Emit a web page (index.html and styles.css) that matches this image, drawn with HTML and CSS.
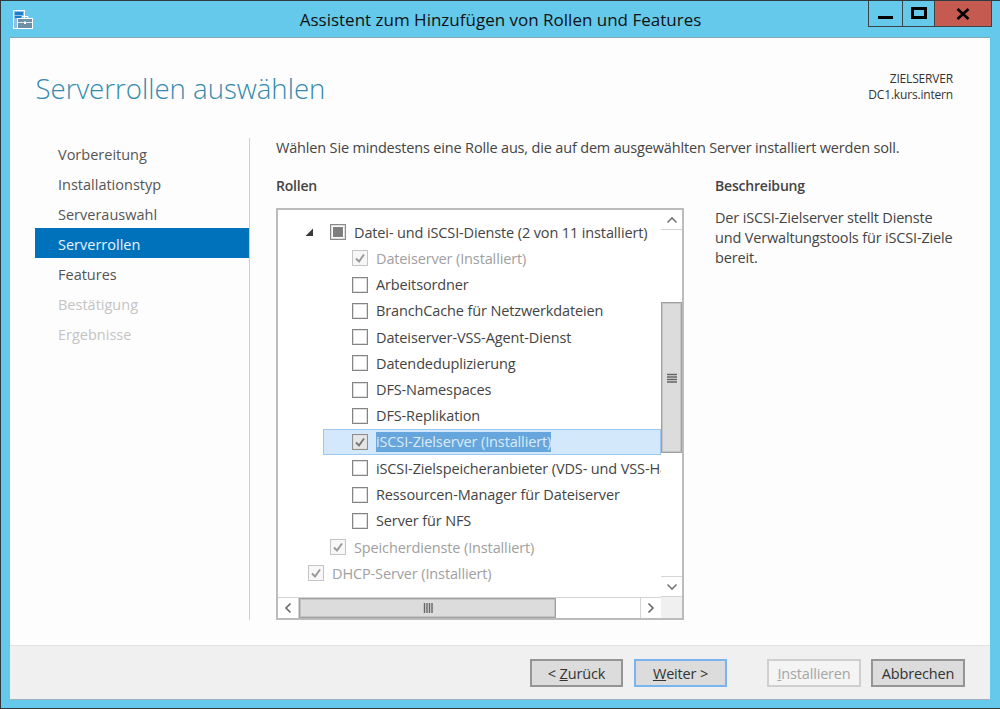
FILE: index.html
```html
<!DOCTYPE html>
<html lang="de">
<head>
<meta charset="utf-8">
<title>Assistent zum Hinzufügen von Rollen und Features</title>
<link rel="stylesheet" href="styles.css">
</head>
<body>
<div class="window">
  <header class="titlebar">
    <div class="app-icon">
      <svg width="20" height="20" viewBox="0 0 20 20">
        <rect x="0.5" y="0.5" width="11" height="18" fill="#8fc1e8" stroke="#fff"/>
        <rect x="2" y="2" width="8" height="3" fill="#1b7fd0"/>
        <rect x="2" y="6" width="8" height="2" fill="#1b7fd0"/>
        <rect x="4.5" y="8.5" width="15" height="10" fill="#6f8fa6" stroke="#fff"/>
        <path d="M9 8.500V6.500h6v2" fill="none" stroke="#fff"/>
        <rect x="5" y="12" width="14" height="1" fill="#dbe7ef"/>
        <rect x="11" y="11.500" width="2" height="2.500" fill="#fff"/>
      </svg>
    </div>
    <h1 class="window-title">Assistent zum Hinzufügen von Rollen und Features</h1>
    <div class="window-controls">
      <div class="ctl ctl-min"><span class="glyph-min"></span></div>
      <div class="ctl ctl-max"><span class="glyph-max"></span></div>
      <div class="ctl ctl-close">
        <svg width="14" height="12" viewBox="0 0 14 12"><path d="M1.500 1l11 10M12.500 1l-11 10" stroke="#000" stroke-width="2.600" fill="none"/></svg>
      </div>
    </div>
  </header>

  <div class="dialog">
    <div class="page">
      <div class="page-head">
        <h2 class="page-title">Serverrollen auswählen</h2>
        <div class="target">ZIELSERVER<br>DC1.kurs.intern</div>
      </div>
      <div class="page-body">
        <nav class="steps">
          <div class="step">Vorbereitung</div>
          <div class="step">Installationstyp</div>
          <div class="step">Serverauswahl</div>
          <div class="step step-active">Serverrollen</div>
          <div class="step">Features</div>
          <div class="step step-off">Bestätigung</div>
          <div class="step step-off">Ergebnisse</div>
        </nav>
        <main class="content">
          <p class="intro">Wählen Sie mindestens eine Rolle aus, die auf dem ausgewählten Server installiert werden soll.</p>
          <div class="columns">
            <section class="roles">
              <h3 class="label">Rollen</h3>
              <div class="listbox">
                <div class="tree">
                  <div class="row lvl2-arrow">
                    <svg class="arrow" width="10" height="10" viewBox="0 0 10 10"><path d="M9 1.500V9H1.500z" fill="#3a3a3a"/></svg>
                    <span class="cb cb-partial"></span><span class="txt">Datei- und iSCSI-Dienste (2 von 11 installiert)</span>
                  </div>
                  <div class="row lvl3 off"><span class="cb cb-on"><svg width="14" height="14" viewBox="0 0 14 14"><path d="M3 7.500l3 3 5-7" fill="none" stroke="#9a9a9a" stroke-width="2"/></svg></span><span class="txt">Dateiserver (Installiert)</span></div>
                  <div class="row lvl3"><span class="cb"></span><span class="txt">Arbeitsordner</span></div>
                  <div class="row lvl3"><span class="cb"></span><span class="txt">BranchCache für Netzwerkdateien</span></div>
                  <div class="row lvl3"><span class="cb"></span><span class="txt">Dateiserver-VSS-Agent-Dienst</span></div>
                  <div class="row lvl3"><span class="cb"></span><span class="txt">Datendeduplizierung</span></div>
                  <div class="row lvl3"><span class="cb"></span><span class="txt">DFS-Namespaces</span></div>
                  <div class="row lvl3"><span class="cb"></span><span class="txt">DFS-Replikation</span></div>
                  <div class="row lvl3 selected"><span class="cb cb-on"><svg width="14" height="14" viewBox="0 0 14 14"><path d="M3 7.500l3 3 5-7" fill="none" stroke="#7a7a7a" stroke-width="2"/></svg></span><span class="txt txt-sel">iSCSI-Zielserver (Installiert)</span></div>
                  <div class="row lvl3"><span class="cb"></span><span class="txt">iSCSI-Zielspeicheranbieter (VDS- und VSS-Hardwareanbieter)</span></div>
                  <div class="row lvl3"><span class="cb"></span><span class="txt">Ressourcen-Manager für Dateiserver</span></div>
                  <div class="row lvl3"><span class="cb"></span><span class="txt">Server für NFS</span></div>
                  <div class="row lvl2 off"><span class="cb cb-on"><svg width="14" height="14" viewBox="0 0 14 14"><path d="M3 7.500l3 3 5-7" fill="none" stroke="#9a9a9a" stroke-width="2"/></svg></span><span class="txt">Speicherdienste (Installiert)</span></div>
                  <div class="row lvl1 off"><span class="cb cb-on"><svg width="14" height="14" viewBox="0 0 14 14"><path d="M3 7.500l3 3 5-7" fill="none" stroke="#9a9a9a" stroke-width="2"/></svg></span><span class="txt">DHCP-Server (Installiert)</span></div>
                </div>
                <div class="vbar">
                  <div class="sb-btn sb-btn-up"><svg width="12" height="8" viewBox="0 0 12 8"><path d="M1.500 6.500L6 2l4.500 4.500" fill="none" stroke="#777" stroke-width="1.600"/></svg></div>
                  <div class="vtrack">
                    <div class="vthumb"><svg width="10" height="10" viewBox="0 0 10 10"><path d="M0 1.500h10M0 4h10M0 6.500h10M0 9h10" stroke="#666" stroke-width="1.400"/></svg></div>
                  </div>
                  <div class="sb-btn sb-btn-down"><svg width="12" height="8" viewBox="0 0 12 8"><path d="M1.500 1.500L6 6l4.500-4.500" fill="none" stroke="#777" stroke-width="1.600"/></svg></div>
                </div>
                <div class="hbar">
                  <div class="sb-btn sb-btn-left"><svg width="8" height="12" viewBox="0 0 8 12"><path d="M6.500 1.500L2 6l4.500 4.500" fill="none" stroke="#666" stroke-width="1.600"/></svg></div>
                  <div class="htrack">
                    <div class="hthumb"><svg width="10" height="10" viewBox="0 0 10 10"><path d="M1.500 0v10M4 0v10M6.500 0v10M9 0v10" stroke="#666" stroke-width="1.400"/></svg></div>
                  </div>
                  <div class="sb-btn sb-btn-right"><svg width="8" height="12" viewBox="0 0 8 12"><path d="M1.500 1.500L6 6l-4.500 4.500" fill="none" stroke="#666" stroke-width="1.600"/></svg></div>
                </div>
                <div class="corner"></div>
              </div>
            </section>
            <aside class="desc">
              <h3 class="label">Beschreibung</h3>
              <p class="desc-text">Der iSCSI-Zielserver stellt Dienste<br>und Verwaltungstools für iSCSI-Ziele<br>bereit.</p>
            </aside>
          </div>
        </main>
      </div>
    </div>
    <footer class="footer">
      <div class="btn btn-back">&lt; <u>Z</u>urück</div>
      <div class="btn btn-default"><u>W</u>eiter &gt;</div>
      <div class="btn btn-off btn-gap"><u>I</u>nstallieren</div>
      <div class="btn">Abbrechen</div>
    </footer>
  </div>
</div>
</body>
</html>
```

FILE: styles.css
```css
* { box-sizing: border-box; }
html, body { margin: 0; padding: 0; }
body {
  width: 1000px;
  height: 709px;
  overflow: hidden;
  font-family: "Open Sans", "Noto Sans", sans-serif;
  font-size: 14.5px;
  letter-spacing: -0.17px;
  color: #444;
}
.window {
  width: 1000px;
  height: 709px;
  display: flex;
  flex-direction: column;
  background: #65c9ec;
  border: 1px solid #2e3a40;
  border-right: 0;
  padding-bottom: 9px;
}
.titlebar {
  height: 37px;
  flex: none;
  display: grid;
  grid-template-columns: 1fr auto 1fr;
  align-items: start;
}
.app-icon { padding: 9px 0 0 12px; }
.window-title {
  margin: 8px 0 0;
  font-size: 17px;
  font-weight: 400;
  line-height: 22px;
  color: #111;
  letter-spacing: 0;
}
.window-controls {
  display: flex;
  justify-content: flex-end;
  padding-right: 8px;
}
.ctl {
  height: 26px;
  display: flex;
  align-items: center;
  justify-content: center;
  border: 1px solid #3c4448;
  border-top: 0;
  border-left: 0;
}
.ctl-min { width: 35px; border-left: 1px solid #3c4448; }
.ctl-max { width: 32px; }
.ctl-close { width: 57px; background: #c45a50; }
.glyph-min { width: 15px; height: 3px; background: #000; margin-top: 8px; }
.glyph-max { width: 16px; height: 12px; border: 3px solid #000; margin-top: -2px; }
.dialog {
  flex: 1;
  margin: 0 10px 0 9px;
  display: flex;
  flex-direction: column;
  background: #fff;
  box-shadow: 0 -1px 0 #7fa9bd;
}
.page { flex: 1; display: flex; flex-direction: column; background: #fdfdfd; }
.page-head {
  height: 100px;
  flex: none;
  display: flex;
  justify-content: space-between;
  padding: 31px 37px 0 25.500px;
}
.target { margin-top: 1px; }
.page-title {
  margin: 0;
  font-size: 27.600px;
  font-weight: 300;
  line-height: 38px;
  color: #348aaf;
  letter-spacing: 0;
}
.target {
  font-size: 12px;
  line-height: 16px;
  text-align: right;
  color: #333;
  padding-top: 1px;
  letter-spacing: -0.18px;
}
.page-body { flex: 1; display: flex; padding-left: 25px; }
.steps { width: 215px; flex: none; height: 482px; border-right: 1px solid #cfcfcf; }
.step { height: 30px; width: 214px; line-height: 30px; padding: 2px 0 0 23px; font-size: 14.500px; letter-spacing: 0; color: #555; }
.step-active { background: #0072bc; color: #e8f4fc; }
.step-off { color: #c4c4c4; }
.content { flex: 1; padding-left: 26px; }
.intro { margin: 0; height: 42px; line-height: 19px; color: #444; }
.columns { display: flex; }
.roles { width: 439px; flex: none; }
.label { margin: 0 0 17px; font-size: 14px; line-height: 11px; height: 11px; font-weight: 600; color: #444; letter-spacing: -0.2px; }
.listbox {
  width: 408px;
  height: 412px;
  border: 2px solid #bcbcbc;
  display: grid;
  grid-template-columns: 1fr 21px;
  grid-template-rows: 1fr 21px;
  background: #fff;
}
.tree { padding-top: 9px; overflow: hidden; min-width: 0; }
.row { height: 26.250px; display: flex; align-items: center; white-space: nowrap; letter-spacing: -0.13px; }
.lvl1 { padding-left: 30px; }
.lvl2 { padding-left: 52px; }
.lvl2-arrow { padding-left: 26px; }
.lvl3 { padding-left: 29px; margin-left: 45px; }
.arrow { margin-right: 16px; }
.cb {
  width: 16px;
  height: 16px;
  flex: none;
  border: 1px solid #858585;
  background: #fff;
  box-shadow: inset 0 0 0 1px #dedede;
  display: flex;
  align-items: center;
  justify-content: center;
  margin-right: 8px;
}
.cb-partial { border-color: #8a8a8a; padding: 2px; }
.cb-partial::before { content: ""; width: 100%; height: 100%; background: #7f7f7f; }
.txt { color: #444; }
.off .txt { color: #a0a0a0; }
.off .cb { border-color: #c4c4c4; background: #f7f7f7; box-shadow: none; }
.selected { background: #d3e8fa; box-shadow: inset 0 0 0 1px #9cc7ee; }
.selected .cb { border-color: #8f8f8f; background: #e6e6e6; }
.txt-sel { background: #66a6dc; color: #dcebf7; line-height: 20px; }
.vbar { display: flex; flex-direction: column; }
.sb-btn { display: flex; align-items: center; justify-content: center; background: #fff; flex: none; }
.sb-btn-up { height: 20px; border-bottom: 1px solid #d4d4d4; }
.sb-btn-down { height: 21px; border-top: 1px solid #d4d4d4; border-bottom: 1px solid #d4d4d4; }
.vtrack { flex: 1; background: #fff; }
.vthumb {
  margin-top: 72px;
  height: 151px;
  background: #dcdcdc;
  border: 1px solid #a0a0a0;
  box-shadow: inset 0 0 0 1px #c4c4c4;
  display: flex;
  align-items: center;
  justify-content: center;
}
.hbar { display: flex; min-width: 0; border-top: 1px solid #d4d4d4; }
.sb-btn-left { width: 21px; border-right: 1px solid #d4d4d4; }
.sb-btn-right { width: 21px; border-left: 1px solid #d4d4d4; }
.htrack { flex: 1; background: #fff; }
.hthumb {
  width: 257px;
  height: 100%;
  background: #dcdcdc;
  border: 1px solid #a0a0a0;
  box-shadow: inset 0 0 0 1px #c4c4c4;
  display: flex;
  align-items: center;
  justify-content: center;
}
.corner { background: #f0f0f0; }
.desc { flex: 1; }
.desc-text { margin: 16px 0 0; line-height: 20px; color: #444; }
.footer {
  height: 54px;
  flex: none;
  display: flex;
  align-items: flex-start;
  justify-content: flex-end;
  gap: 10px;
  padding: 13px 25px 0 0;
  background: #f0f0f0;
  border-top: 1px solid #e3e3e3;
  box-shadow: 0 1px 0 #9fb3bd;
}
.btn {
  width: 94px;
  height: 28px;
  line-height: 25px;
  text-align: center;
  background: #dcdcdc;
  border: 2px solid #959595;
  color: #333;
}
.btn-back { width: 93px; margin-right: 1px; }
.btn-default { width: 93px; border-color: #7ab4ee; }
.btn-off { background: #f4f4f4; border-color: #cfcfcf; color: #a6a6a6; }
.btn-gap { margin-left: 30px; }
```
